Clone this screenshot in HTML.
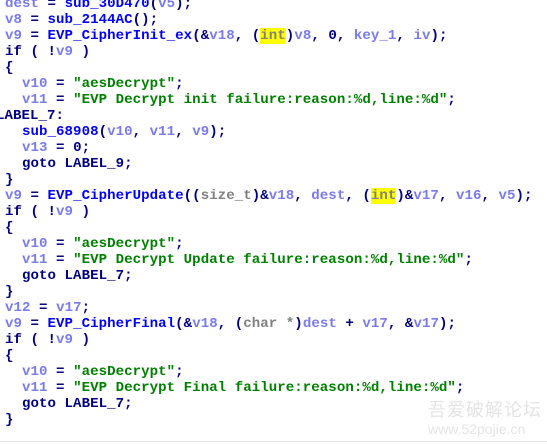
<!DOCTYPE html>
<html><head><style>
html,body{margin:0;padding:0;background:#fff;width:547px;height:445px;overflow:hidden}
pre{margin:0;position:absolute;left:5px;top:-4px;font-family:"Liberation Mono",monospace;font-weight:bold;font-size:14.1px;line-height:16px;color:#000080;letter-spacing:0.05px}
.v{color:#7a7af0}.f{color:#0000ff}.s{color:#008000}.t{color:#808080}.h{background:#ffff00;color:#808080}
.lb{position:relative;left:-9px}
.wm{position:absolute;left:428px;font-family:"Liberation Sans","Noto Sans CJK SC",sans-serif;color:#e4e4e4;white-space:nowrap}
.bl{position:absolute;left:0;right:0;top:441px;height:1px;background:#e8e8e8}
</style></head><body>
<pre><span class="v">dest</span> = <span class="f">sub_30D470</span>(<span class="v">v5</span>);
<span class="v">v8</span> = <span class="f">sub_2144AC</span>();
<span class="v">v9</span> = <span class="f">EVP_CipherInit_ex</span>(&amp;<span class="v">v18</span>, (<span class="h">int</span>)<span class="v">v8</span>, 0, <span class="v">key_1</span>, <span class="v">iv</span>);
if ( !<span class="v">v9</span> )
{
  <span class="v">v10</span> = <span class="s">"aesDecrypt"</span>;
  <span class="v">v11</span> = <span class="s">"EVP Decrypt init failure:reason:%d,line:%d"</span>;
<span class="lb">LABEL_7:</span>
  <span class="f">sub_68908</span>(<span class="v">v10</span>, <span class="v">v11</span>, <span class="v">v9</span>);
  <span class="v">v13</span> = 0;
  goto LABEL_9;
}
<span class="v">v9</span> = <span class="f">EVP_CipherUpdate</span>((<span class="t">size_t</span>)&amp;<span class="v">v18</span>, <span class="v">dest</span>, (<span class="h">int</span>)&amp;<span class="v">v17</span>, <span class="v">v16</span>, <span class="v">v5</span>);
if ( !<span class="v">v9</span> )
{
  <span class="v">v10</span> = <span class="s">"aesDecrypt"</span>;
  <span class="v">v11</span> = <span class="s">"EVP Decrypt Update failure:reason:%d,line:%d"</span>;
  goto LABEL_7;
}
<span class="v">v12</span> = <span class="v">v17</span>;
<span class="v">v9</span> = <span class="f">EVP_CipherFinal</span>(&amp;<span class="v">v18</span>, (<span class="t">char *</span>)<span class="v">dest</span> + <span class="v">v17</span>, &amp;<span class="v">v17</span>);
if ( !<span class="v">v9</span> )
{
  <span class="v">v10</span> = <span class="s">"aesDecrypt"</span>;
  <span class="v">v11</span> = <span class="s">"EVP Decrypt Final failure:reason:%d,line:%d"</span>;
  goto LABEL_7;
}</pre>
<div class="wm" style="top:396px;font-size:18px;letter-spacing:1px">吾爱破解论坛</div>
<div class="wm" style="top:421px;font-size:14px">www.52pojie.cn</div>
<div class="bl"></div>
</body></html>
